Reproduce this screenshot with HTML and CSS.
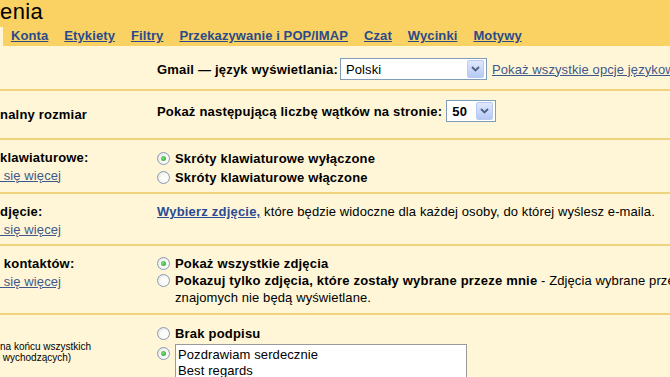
FILE: index.html
```html
<!DOCTYPE html>
<html lang="pl">
<head>
<meta charset="utf-8">
<title>Ustawienia</title>
<link rel="stylesheet" href="styles.css">
</head>
<body>
<div class="header">
  <div class="title">enia</div>
  <nav class="tabs">
    <span class="tab-active"></span>
    <a class="tab" href="#">Konta</a>
    <a class="tab" href="#">Etykiety</a>
    <a class="tab" href="#">Filtry</a>
    <a class="tab" href="#">Przekazywanie i POP/IMAP</a>
    <a class="tab" href="#">Czat</a>
    <a class="tab" href="#">Wycinki</a>
    <a class="tab" href="#">Motywy</a>
  </nav>
</div>
<div class="settings">
  <div class="row r1">
    <div class="label"></div>
    <div class="value">
      <b>Gmail — język wyświetlania:</b>
      <span class="select sel-lang"><span class="sel-text">Polski</span><span class="sel-btn"><svg width="9" height="6" viewBox="0 0 9 6"><path d="M1 1 L4.5 4.5 L8 1" fill="none" stroke="#4d6185" stroke-width="1.8"/></svg></span></span>
      <a class="link" href="#">Pokaż wszystkie opcje językowe</a>
    </div>
  </div>
  <div class="row r2">
    <div class="label"><b>nalny rozmiar</b></div>
    <div class="value">
      <b>Pokaż następującą liczbę wątków na stronie:</b>
      <span class="select sel-num"><span class="sel-text"><b>50</b></span><span class="sel-btn"><svg width="9" height="6" viewBox="0 0 9 6"><path d="M1 1 L4.5 4.5 L8 1" fill="none" stroke="#4d6185" stroke-width="1.8"/></svg></span></span>
    </div>
  </div>
  <div class="row r3">
    <div class="label">
      <div class="lbl-line"><b>klawiaturowe:</b></div>
      <div class="lbl-line"><a class="link" href="#">&nbsp;się więcej</a></div>
    </div>
    <div class="value">
      <div class="opt"><span class="radio on"></span><b>Skróty klawiaturowe wyłączone</b></div>
      <div class="opt"><span class="radio"></span><b>Skróty klawiaturowe włączone</b></div>
    </div>
  </div>
  <div class="row r4">
    <div class="label">
      <div class="lbl-line"><b>djęcie:</b></div>
      <div class="lbl-line"><a class="link" href="#">&nbsp;się więcej</a></div>
    </div>
    <div class="value">
      <div class="lbl-line"><a class="link-bold" href="#">Wybierz zdjęcie,</a> które będzie widoczne dla każdej osoby, do której wyślesz e-maila.</div>
      <div class="lbl-line">&nbsp;</div>
    </div>
  </div>
  <div class="row r5">
    <div class="label">
      <div class="lbl-line"><b>&nbsp;kontaktów:</b></div>
      <div class="lbl-line"><a class="link" href="#">&nbsp;się więcej</a></div>
      <div class="lbl-line">&nbsp;</div>
    </div>
    <div class="value">
      <div class="opt2"><span class="radio on"></span><b>Pokaż wszystkie zdjęcia</b></div>
      <div class="opt2"><span class="radio"></span><div class="opt2-text"><b>Pokazuj tylko zdjęcia, które zostały wybrane przeze mnie</b> - Zdjęcia wybrane przez moich<br>znajomych nie będą wyświetlane.</div></div>
    </div>
  </div>
  <div class="row r6">
    <div class="label small">
      <div>na końcu wszystkich</div>
      <div>&nbsp;wychodzących)</div>
    </div>
    <div class="value">
      <div class="opt2"><span class="radio"></span><b>Brak podpisu</b></div>
      <div class="sig"><span class="radio on"></span><div class="textarea">Pozdrawiam serdecznie<br>Best <span class="spell">regards</span></div></div>
    </div>
  </div>
</div>
</body>
</html>
```
FILE: styles.css
```css
html, body {
  margin: 0;
  padding: 0;
}
body {
  width: 670px;
  height: 377px;
  overflow: hidden;
  background: #fff6d7;
  font-family: "Liberation Sans", Arial, sans-serif;
  font-size: 13px;
  letter-spacing: 0.1px;
  color: #000;
}
b {
  font-weight: bold;
  letter-spacing: 0.2px;
}
.header {
  background: #f9d263;
  height: 46px;
  display: flex;
  flex-direction: column;
}
.title {
  font-size: 22px;
  line-height: 24px;
  height: 23px;
  letter-spacing: 0.4px;
  white-space: nowrap;
}
.tabs {
  display: flex;
  align-items: flex-end;
  height: 23px;
  white-space: nowrap;
}
.tab-active {
  width: 3px;
  height: 19px;
  background: #fff6d7;
  margin-right: 8px;
}
.tab {
  color: #2b4a8c;
  font-weight: bold;
  letter-spacing: 0.1px;
  line-height: 20px;
  margin-right: 16px;
}
.settings {
  display: flex;
  flex-direction: column;
}
.row {
  display: grid;
  grid-template-columns: 157px 1fr;
  align-items: center;
  border-bottom: 2px solid #efd47d;
  white-space: nowrap;
}
.r1 { height: 43px; }
.r2 { height: 47px; }
.r3 { height: 52px; }
.r4 { height: 50px; }
.r5 { height: 67px; }
.r6 { height: 62px; border-bottom: 0; align-items: start; }
.value {
  display: flex;
  flex-direction: column;
}
.r1 .value, .r2 .value {
  flex-direction: row;
  align-items: center;
}
.r1 .value { padding-top: 3px; }
.r2 .value { padding-bottom: 7px; }
.r3 .value { padding-top: 3px; }
.r3 .label { padding-top: 1px; }
.r4 .value, .r4 .label { padding-top: 4px; }
.lbl-line {
  line-height: 18px;
}
.link {
  color: #3f578a;
}
.link-bold {
  color: #2a4c93;
  font-weight: bold;
  letter-spacing: 0.2px;
}
.select {
  display: inline-flex;
  align-items: center;
  height: 20px;
  background: #fff;
  border: 1px solid #7f9db9;
  margin-left: 2px;
}
.sel-lang { width: 145px; margin-right: 5px; }
.sel-num { width: 48px; margin-left: 4px; }
.sel-text {
  flex: 1;
  padding-left: 5px;
}
.sel-btn {
  width: 15px;
  height: 16px;
  margin-right: 2px;
  border: 1px solid #b9cbef;
  border-radius: 2px;
  background: linear-gradient(#dfe8fd, #b6c9f5);
  display: flex;
  align-items: center;
  justify-content: center;
}
.opt {
  display: flex;
  align-items: center;
  height: 19px;
  line-height: 19px;
}
.opt2 {
  display: flex;
  align-items: flex-start;
  line-height: 17px;
}
.opt2 .radio { margin-top: 2px; }
.opt2-text {
  line-height: 17px;
}
.radio {
  width: 11px;
  height: 11px;
  border: 1px solid #8a9ab3;
  border-radius: 50%;
  background: radial-gradient(circle at 60% 60%, #fbfbfa 40%, #d8d8d2 100%);
  margin-right: 5px;
  flex: none;
  display: flex;
  align-items: center;
  justify-content: center;
}
.radio.on::after {
  content: "";
  width: 5px;
  height: 5px;
  border-radius: 50%;
  background: radial-gradient(circle at 40% 40%, #7ce07c, #1f9a1f);
}
.r5 .label { align-self: start; padding-top: 9px; }
.r5 .value { align-self: start; padding-top: 9px; }
.r6 .value { padding-top: 10px; }
.small {
  font-size: 10px;
  line-height: 11px;
  letter-spacing: 0;
  padding-top: 26px;
}
.sig {
  display: flex;
  align-items: flex-start;
  margin-top: 2px;
}
.sig .radio { margin-top: 3px; }
.textarea {
  width: 288px;
  height: 40px;
  background: #fff;
  border: 1px solid #9a9a9a;
  padding: 2px 0 0 2px;
  line-height: 16px;
  font-size: 13px;
}
.spell {
  text-decoration: underline wavy #d33;
  text-decoration-thickness: 1px;
}
```
